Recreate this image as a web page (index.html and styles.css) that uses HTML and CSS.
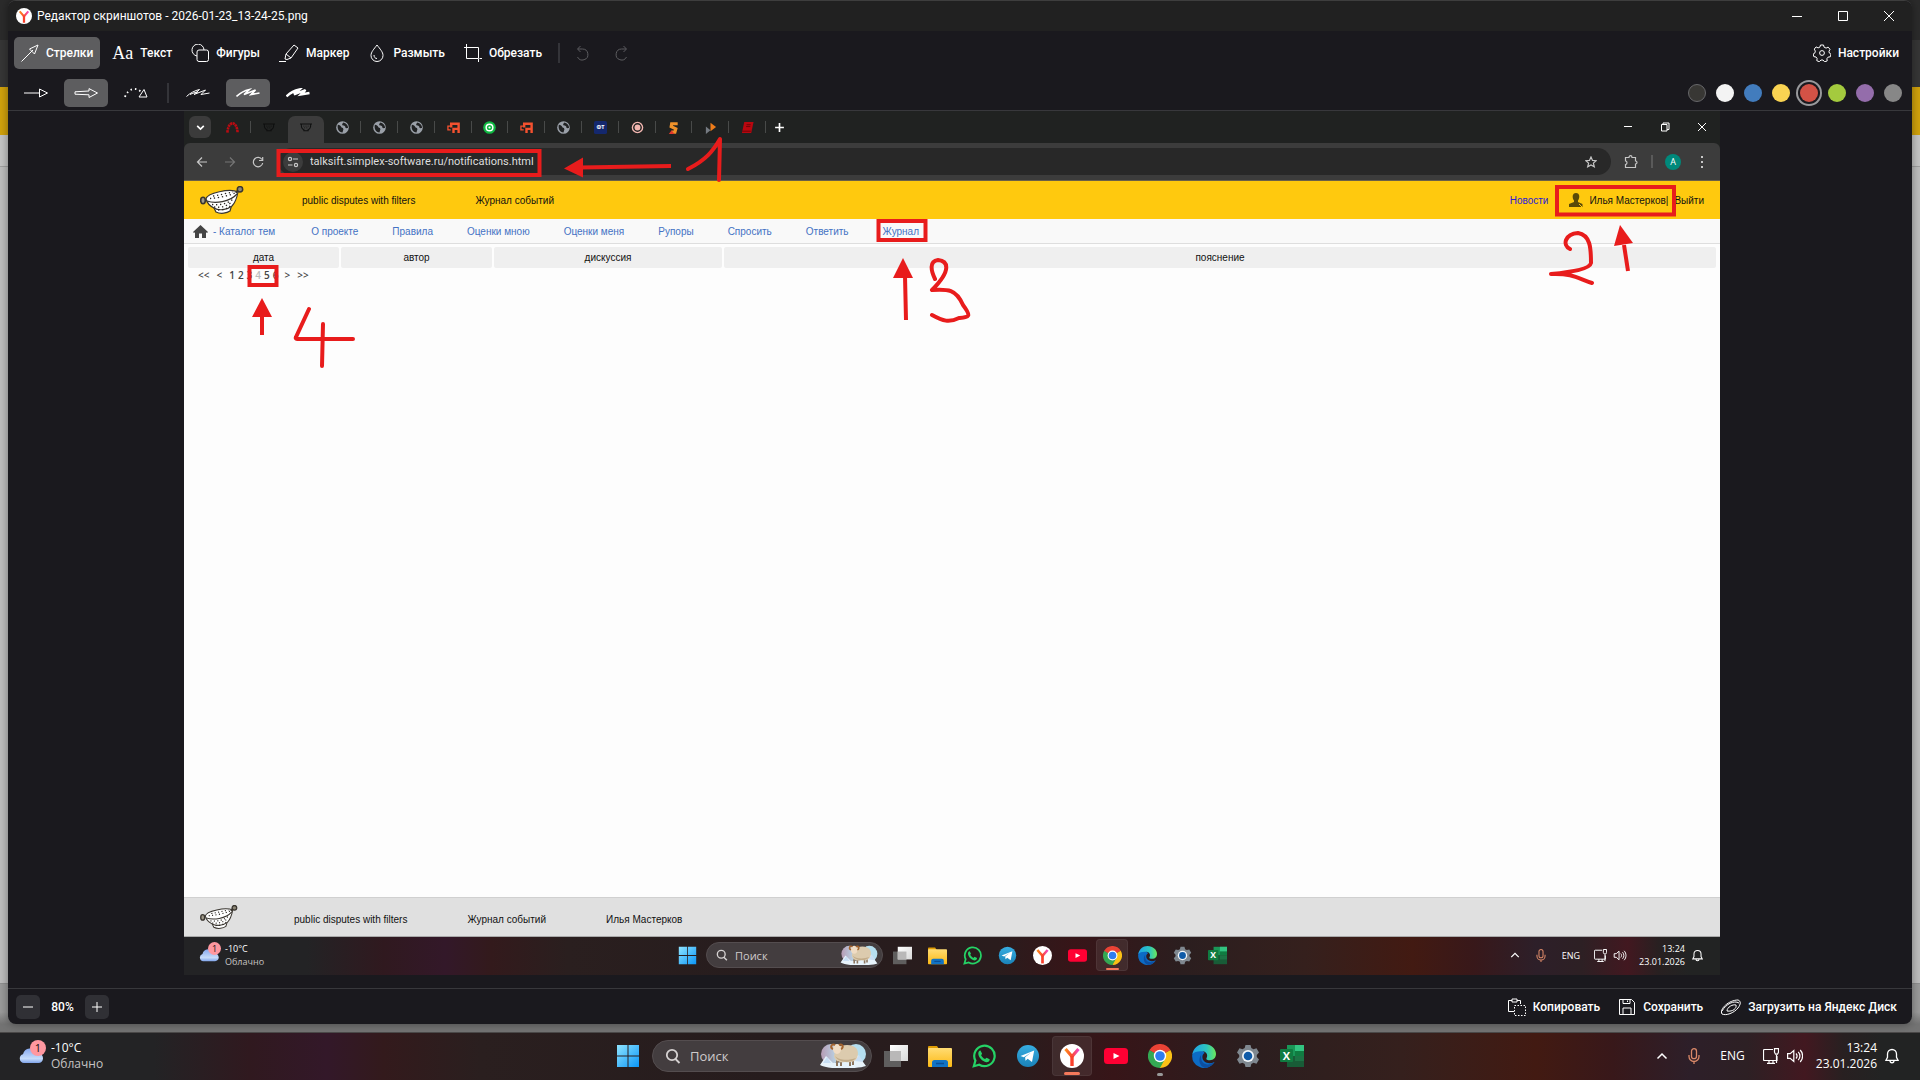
FILE: index.html
```html
<!DOCTYPE html>
<html lang="ru">
<head>
    <meta charset="UTF-8">
    <meta name="viewport" content="width=device-width, initial-scale=1.0">
    <title>Редактор скриншотов</title>
    <link rel="stylesheet" href="styles.css">
</head>
<body>
    <!-- shared icons -->
    <svg class="defs" aria-hidden="true">
        <defs>
            <linearGradient id="g-win" x1="0" y1="0" x2="1" y2="1"><stop offset="0" stop-color="#8fe4ff"/><stop offset="1" stop-color="#0a96f8"/></linearGradient>
            <linearGradient id="g-tg" x1="0" y1="0" x2="0" y2="1"><stop offset="0" stop-color="#37aee2"/><stop offset="1" stop-color="#1a82b8"/></linearGradient>
            <linearGradient id="g-fold" x1="0" y1="0" x2="0" y2="1"><stop offset="0" stop-color="#ffdc73"/><stop offset="1" stop-color="#fcb914"/></linearGradient>
            <linearGradient id="g-y" x1="0" y1="0" x2="1" y2="0"><stop offset="0" stop-color="#ff8a1f"/><stop offset=".5" stop-color="#fa4a2c"/><stop offset="1" stop-color="#f34ac6"/></linearGradient>
            <linearGradient id="g-edge" x1="0" y1="0" x2="1" y2="0"><stop offset="0" stop-color="#1fa2e8"/><stop offset=".6" stop-color="#2cc5c0"/><stop offset="1" stop-color="#6be85a"/></linearGradient>
            <linearGradient id="g-tv" x1="0" y1="0" x2="1" y2="1"><stop offset="0" stop-color="#ffffff"/><stop offset="1" stop-color="#d8d8d8"/></linearGradient>
            <linearGradient id="g-cloud" x1="0" y1="0" x2="0" y2="1"><stop offset="0" stop-color="#86a8ee"/><stop offset=".7" stop-color="#c6dcfa"/><stop offset="1" stop-color="#7fa3ea"/></linearGradient>
            <linearGradient id="g-sky" x1="0" y1="0" x2="1" y2="0"><stop offset="0" stop-color="#b79cb4"/><stop offset="1" stop-color="#b9e4f4"/></linearGradient>
            <symbol id="i-win" viewBox="0 0 24 24"><path fill="url(#g-win)" d="M1 1h10.500v10.500H1zM12.500 1H23v10.500H12.500zM1 12.500h10.500V23H1zM12.500 12.500H23V23H12.500z"/></symbol>
            <symbol id="i-tasks" viewBox="0 0 24 24"><path fill="#5f5e5e" d="M0 7h17v16H0z"/><path fill="url(#g-tv)" d="M6 1h18v16H6z"/><path fill="#b9b8b8" d="M6 7h11v10H6z"/></symbol>
            <symbol id="i-folder" viewBox="0 0 24 24"><path fill="#e09d05" d="M0 3a1 1 0 0 1 1-1h8l2 3v4H0z"/><rect y="4" width="24" height="19" rx="1" fill="url(#g-fold)"/><path fill="#1173c4" d="M4 23v-4.500a2.500 2.500 0 0 1 2.500-2.500h11a2.500 2.500 0 0 1 2.500 2.500V23z"/><path stroke="#0a4e96" stroke-width="1.500" d="M8 19.500h8"/></symbol>
            <symbol id="i-wa" viewBox="0 0 24 24"><path fill="none" stroke="#25d366" stroke-width="2.200" d="M1.800 22.200l1.600-5.600A10.200 10.200 0 1 1 7.300 20.700z"/><path fill="#25d366" d="M8.500 6.500l1.600 3.300-1 1.400c1 2 2.200 3 4 3.900l1.400-1.400 3.200 1.500c.1 2.200-1.700 3.200-3.500 3C10.500 17.600 6.400 13.500 6.300 9.600c0-1.700.8-3.200 2.200-3.100z"/></symbol>
            <symbol id="i-tg" viewBox="0 0 24 24"><circle cx="12" cy="12" r="11" fill="url(#g-tg)"/><path fill="#fff" d="M4.500 12L18.200 6.500 16 18l-4.300-3.200-2.200 2-.4-3.600 6-4.700-7.300 4.700z"/></symbol>
            <symbol id="i-ya" viewBox="0 0 24 24"><circle cx="12" cy="12" r="12" fill="#fff"/><path fill="none" stroke="url(#g-y)" stroke-width="3.200" d="M5.500 5l6.500 7.500L18.500 5"/><path stroke="#f9402c" stroke-width="3.400" d="M12 12v10"/></symbol>
            <symbol id="i-yt" viewBox="0 0 24 24"><rect y="4" width="24" height="16" rx="3.500" fill="#ff0033"/><path fill="#fff" d="M9.500 9l6 3-6 3z"/></symbol>
            <symbol id="i-chrome" viewBox="0 0 24 24"><path fill="#ea4335" d="M12 12L1.600 6A12 12 0 0 1 22.400 6z"/><path fill="#fbc116" d="M12 12l10.400-6A12 12 0 0 1 12 24z"/><path fill="#34a853" d="M1.600 6A12 12 0 0 0 12 24l5-9L12 12z"/><path fill="#ea4335" d="M12 6h10.400L12 1 1.600 6l5 3z"/><circle cx="12" cy="12" r="6.200" fill="#fff"/><circle cx="12" cy="12" r="4.800" fill="#2f7df0"/></symbol>
            <symbol id="i-edge" viewBox="0 0 24 24"><path fill="#0c6bc4" d="M.2 11A12 12 0 0 0 20 21c1.500-1.300 2.600-2.700 2.400-3-6 3-12 0-12-5 0-2 1-3.500 2.400-4C9 4 1.500 5 .2 11z"/><path fill="url(#g-edge)" d="M.3 10.500C1.300 4.500 6 .1 12 .1c7 0 12 4.900 12 9.900 0 3.800-2.800 6.200-6 6.200-2.500 0-4.200-.8-3.600-1.800 1.800-2.600.6-6.600-3.600-7.100C6.500 6.800 2 7.500.3 10.500z"/><path fill="#0d4ea0" d="M9 13c0 6 5 10 13 5.500A12 12 0 0 1 13 24C7 22 6 15 9 11z"/></symbol>
            <symbol id="i-gear" viewBox="0 0 24 24"><path fill="#7f8890" d="M9.500 1h5l.8 3 2.200 1.200 3-.9 2.500 4.200L20.800 11v2l2.200 2.500-2.500 4.200-3-.9-2.200 1.200-.8 3h-5l-.8-3-2.200-1.200-3 .9L1 15.500 3.200 13v-2L1 8.500l2.500-4.200 3 .9L8.700 4z"/><circle cx="12" cy="12" r="6" fill="#f2f6f9"/><circle cx="12" cy="12" r="4.300" fill="#0f5ba8"/></symbol>
            <symbol id="i-excel" viewBox="0 0 24 24"><path fill="#1a9657" d="M7 1h17v11H7z"/><path fill="#33c481" d="M15 1h9v6h-9z"/><path fill="#107c41" d="M15 7h9v5h-9z"/><path fill="#185c37" d="M7 12h17v11H7z"/><path fill="#1c7445" d="M15 12h9v5h-9z"/><rect y="5" width="13" height="13" rx="1" fill="#107c41"/><text x="6.500" y="15.500" fill="#fff" font-family="Open Sans, sans-serif" font-weight="700" font-size="11" text-anchor="middle">X</text></symbol>
            <symbol id="i-sheep" viewBox="0 0 46 25"><circle cx="11" cy="11" r="10" fill="url(#g-sky)"/><circle cx="36" cy="11" r="10" fill="#b5dff0"/><path fill="#e7f3fb" d="M0 22l6-9 7 7 20-2 5-6 8 11c-8 3-38 4-46-1z"/><path fill="#c8dff5" d="M3 20l4-6 4 6zM35 18l4-6 4 7z"/><path stroke="#8d7760" stroke-width="2" d="M17 17v6M21 18v5M30 18v5M33 16v6"/><path fill="#dccbae" d="M16 5c5-3 12-4 17-2 5 2 6 7 4 12-2 4-7 5-12 4-6 1-10-1-11-6z"/><path fill="#c2ac8a" d="M15 13c3 4 13 5 21 2-3 5-17 6-21-2z"/><ellipse cx="17" cy="6" rx="4" ry="5" fill="#f0dcc4"/><path fill="none" stroke="#a5632d" stroke-width="2" d="M15 2c-4-2-5 3-2 4M19 2c4-2 5 3 2 4"/></symbol>
            <symbol id="i-cloud" viewBox="0 0 24 16"><path fill="url(#g-cloud)" d="M5 15a4.500 4.500 0 0 1-1-8.800A7.500 7.500 0 0 1 18 4.500c4 .5 6 3 6 6 0 2.500-2 4.500-4.500 4.500z"/></symbol>
            <symbol id="i-search" viewBox="0 0 16 16"><g fill="none" stroke="#d6d2d2" stroke-width="1.800"><circle cx="7" cy="7" r="5.200"/><path d="M10.500 11l4 4"/></g></symbol>
            <symbol id="i-up" viewBox="0 0 12 12"><path fill="none" stroke="currentColor" stroke-width="1.500" d="M1.500 8.500L6 4l4.500 4.500"/></symbol>
            <symbol id="i-mic" viewBox="0 0 12 16"><g fill="none" stroke="#d98868" stroke-width="1.300"><rect x="3.500" y=".7" width="5" height="10" rx="2.500"/><path d="M1 7v1.500a5 5 0 0 0 10 0V7M6 13.500V16"/></g></symbol>
            <symbol id="i-mon" viewBox="0 0 16 16"><g fill="none" stroke="currentColor" stroke-width="1.200"><path d="M10 1.500H1.500a1 1 0 0 0-1 1v9a1 1 0 0 0 1 1H14V8M4 15.400h8M6 12.500v3M10 12.500v3M13.500 7v8"/><path d="M11.500.6h4v3.600l-1 2h-2l-1-2z"/></g></symbol>
            <symbol id="i-vol" viewBox="0 0 16 14"><g fill="none" stroke="currentColor" stroke-width="1.200"><path d="M.6 4.700h2.600L6.800 1.500v11L3.200 9.300H.6zM9 4.500c1.300 1.500 1.300 3.500 0 5M11.200 2.800c2.300 2.400 2.300 6 0 8.400M13.200 1c3.200 3.400 3.200 8.600 0 12"/></g></symbol>
            <symbol id="i-bell" viewBox="0 0 14 16"><g fill="none" stroke="currentColor" stroke-width="1.300"><path d="M1 12.300l1.500-3V6a4.500 4.500 0 0 1 9 0v3.300l1.500 3zM5 12.500c0 3 4 3 4 0"/></g></symbol>
            <symbol id="i-globe" viewBox="0 0 14 14"><circle cx="7" cy="7" r="6.800" fill="#9aa0a8"/><path fill="#202223" d="M2 4c2 0 3 1 4 3 1 0 2 1 2 2l-1 3.500C3 12 1 8 2 4zM8 1.500c-1 1-2 2-1 3s3 0 3 2 2 1 3 1c0-3-2-5.500-5-6z"/></symbol>
            <symbol id="i-bowl" viewBox="0 0 14 12"><path fill="none" stroke="currentColor" stroke-width="1.200" d="M0 2.500h14M1.500 3c0 3.500 1 5.500 3 6v1.500h5V9c2-.5 3-2.500 3-6"/><path stroke="currentColor" stroke-dasharray="1 1.500" d="M4 5h6M5 7h4"/></symbol>
            <symbol id="i-avito" viewBox="0 0 14 14"><path fill="none" stroke="#f4512f" stroke-width="2.600" d="M4.500 7V3h8v10M7 13V8.500h5.500"/><path fill="none" stroke="#f4512f" stroke-width="1.400" d="M4 5.500H1v4h3"/></symbol>
            <symbol id="i-colander" viewBox="0 0 44 28"><g fill="#fff" stroke="#3a3630" stroke-width="1.200"><path d="M14 22l2 4c5 2.500 11 1 14-1l1.500-5z"/><path d="M6 13C7 7 30 2 38 6c-1 5-2 10-6 14-5 4-13 5-18 2-4-2-7-5-8-9z"/><path fill="none" d="M7 15c8 3 23 1 30-7"/><ellipse cx="3" cy="14.500" rx="2.300" ry="3.200" fill="#a09a8a" stroke-width="1.600"/><path fill="none" stroke-width="2" d="M36 7l2-3"/><circle cx="40" cy="3.300" r="2.700" fill="#8d8776" stroke-width="1.500"/></g><g fill="none" stroke="#28241f" stroke-width="1.300" stroke-dasharray="1.300 2.700"><path d="M10 12.500C18 12 28 10 35 7"/><path d="M13 10C20 9 27 7 33 6"/><path d="M12 18.500c8 1 16-1 22-6"/><path d="M14 21c7 1 13-1 18-5"/><path d="M18 24c5 0 9-1 12-4"/></g></symbol>
        </defs>
    </svg>

    <div class="desktop">
        <main class="window">
            <div class="titlebar">
                <svg class="app-icon"><use href="#i-ya"/></svg>
                <h1>Редактор скриншотов - 2026-01-23_13-24-25.png</h1>
                <div class="win-buttons">
                    <button aria-label="Свернуть"><svg viewBox="0 0 10 10"><path d="M0 5.500h10"/></svg></button>
                    <button aria-label="Развернуть"><svg viewBox="0 0 10 10"><path d="M.5.5h9v9h-9z"/></svg></button>
                    <button aria-label="Закрыть"><svg viewBox="0 0 10 10"><path d="M0 0l10 10M10 0L0 10"/></svg></button>
                </div>
            </div>

            <div class="toolbar">
                <button class="tool active"><svg viewBox="0 0 18 18"><path d="M.5 17.500L12 6M8.500 5L17 1l-3.500 9z"/></svg>Стрелки</button>
                <button class="tool"><span class="aa">Aa</span>Текст</button>
                <button class="tool"><svg viewBox="0 0 18 18"><path d="M6 12A6 6 0 1 1 13 6"/><rect x="6" y="6" width="11.500" height="11.500" rx="2"/></svg>Фигуры</button>
                <button class="tool"><svg class="wide" viewBox="0 0 20 18"><path d="M0 17.500h7M6 15l1-5 8-9 4 3-7 10-4 1.500zM7 10l5 4"/></svg>Маркер</button>
                <button class="tool"><svg viewBox="0 0 18 18"><path d="M9 1c3 4 6 7 6 10.500a6 6 0 0 1-12 0C3 8 6 5 9 1zM6 11c0 2 1 3.500 3 3.500"/></svg>Размыть</button>
                <button class="tool"><svg viewBox="0 0 18 18"><path d="M2.500 0v14.500H14.500V3.500H0M14.500 15v3M15.500 14.500H18"/></svg>Обрезать</button>
                <span class="divider"></span>
                <button class="icon-btn" disabled aria-label="Отменить"><svg viewBox="0 0 14 16"><path d="M4.500 1L1.500 4l3 3M2 4h4.500a5.500 5.500 0 1 1-5 8"/></svg></button>
                <button class="icon-btn" disabled aria-label="Повторить"><svg viewBox="0 0 14 16"><path d="M9.500 1l3 3-3 3M12 4H7.500a5.500 5.500 0 1 0 5 8"/></svg></button>
                <button class="tool settings"><svg viewBox="0 0 18 18"><path d="M7.500 1h3l.6 2.200 2 .9 2-1 1.900 2.200-1 2 .3 1.700 1.700 1.200-.7 2.600-2.200.3-1.200 1.600.3 2.200-2.500 1L10 16H8l-1.700 1.700-2.500-1 .3-2.200L3 13l-2.200-.4L.2 10 2 8.800l.3-1.700-1-2 1.800-2.200 2 1 1.800-.8z"/><circle cx="9" cy="9" r="2.400"/></svg>Настройки</button>
            </div>

            <div class="toolbar options">
                <button class="opt" aria-label="Тонкая стрелка"><svg viewBox="0 0 24 10"><path d="M0 5h15.500M15.500 1v8L23.500 5z"/></svg></button>
                <button class="opt active" aria-label="Толстая стрелка"><svg viewBox="0 0 24 10"><path d="M1 3.800L15 3V.6L23.500 5 15 9.500V6.800L1 6.200z"/></svg></button>
                <button class="opt" aria-label="Пунктирная стрелка"><svg viewBox="0 0 24 10"><path stroke-width="1.800" stroke-dasharray="1.500 3" d="M1 9C4 0 13-1 17 4"/><path d="M15 9l5-7.500L23 9z"/></svg></button>
                <span class="divider"></span>
                <button class="opt" aria-label="Тонкая линия"><svg viewBox="0 0 24 10"><path d="M.5 8.500C4 5 9 2.500 13.500 1.500L8 6.500 19.500 2 15 6.500l8.500-1.500M4 6.500c3-1.500 5-2 8-2.500"/></svg></button>
                <button class="opt active" aria-label="Средняя линия"><svg viewBox="0 0 24 10"><path stroke-width="1.600" d="M.5 8.500C4 5 9 2.500 13.500 1.500L8 6.500 19.500 2 15 6.500l8.500-1.500"/></svg></button>
                <button class="opt" aria-label="Толстая линия"><svg viewBox="0 0 24 10"><path stroke-width="2.400" d="M.5 8.500C4 5 9 2.500 13.500 1.500L8 6.500 19.500 2 15 6.500l8.500-1.500"/></svg></button>
                <div class="swatches">
                    <input type="radio" name="color" class="c-black" aria-label="Чёрный">
                    <input type="radio" name="color" class="c-white" aria-label="Белый">
                    <input type="radio" name="color" class="c-blue" aria-label="Синий">
                    <input type="radio" name="color" class="c-yellow" aria-label="Жёлтый">
                    <input type="radio" name="color" class="c-red" aria-label="Красный" checked>
                    <input type="radio" name="color" class="c-green" aria-label="Зелёный">
                    <input type="radio" name="color" class="c-purple" aria-label="Фиолетовый">
                    <input type="radio" name="color" class="c-gray" aria-label="Серый">
                </div>
            </div>

            <div class="stage">
                <div class="shot">
                    <div class="tabstrip">
                        <button class="tab-menu" aria-label="Поиск вкладок"><svg viewBox="0 0 10 10"><path d="M2 3.500l3 3 3-3"/></svg></button>
                        <div class="tabs">
                            <span class="tab"><svg viewBox="0 0 14 14"><path fill="none" stroke="#b90b12" stroke-width="2.800" stroke-dasharray="2.500 .6" d="M1.500 12.500C2 5 5 2.500 7 2.500s5 2.500 5.500 10"/></svg></span>
                            <span class="tab no-line"><svg class="bowl"><use href="#i-bowl"/></svg></span>
                            <span class="tab current"><svg class="bowl"><use href="#i-bowl"/></svg></span>
                            <span class="tab"><svg><use href="#i-globe"/></svg></span>
                            <span class="tab"><svg><use href="#i-globe"/></svg></span>
                            <span class="tab"><svg><use href="#i-globe"/></svg></span>
                            <span class="tab"><svg><use href="#i-avito"/></svg></span>
                            <span class="tab"><svg viewBox="0 0 14 14"><circle cx="7" cy="7" r="6.800" fill="#0fb842"/><circle cx="7" cy="7" r="3.600" fill="none" stroke="#fff" stroke-width="1.600"/><circle cx="7" cy="7" r="1.200" fill="#fff"/></svg></span>
                            <span class="tab"><svg><use href="#i-avito"/></svg></span>
                            <span class="tab"><svg><use href="#i-globe"/></svg></span>
                            <span class="tab"><svg viewBox="0 0 14 14"><rect width="14" height="14" rx="2" fill="#14286e"/><text x="7" y="9" fill="#fff" font-family="Open Sans, sans-serif" font-weight="700" font-size="6" text-anchor="middle">ФТ</text></svg></span>
                            <span class="tab"><svg viewBox="0 0 14 14"><circle cx="7" cy="7" r="5.500" fill="none" stroke="#f2b6b0" stroke-width="1.500"/><circle cx="7" cy="7" r="3.200" fill="#f2b6b0"/></svg></span>
                            <span class="tab"><svg viewBox="0 0 14 14"><path fill="none" stroke="#f0922a" stroke-width="3.400" d="M11.500 3L5 3l-.5 3 5 2.500-1 3.500H5"/><path fill="#e0392b" d="M2 14l3-4 3 4z"/></svg></span>
                            <span class="tab"><svg viewBox="0 0 14 14"><path fill="#757b82" d="M2 6l5 4-5 4z"/><path fill="#ef7c1a" d="M7 2l6 4.500L7 11z"/></svg></span>
                            <span class="tab"><svg viewBox="0 0 14 14"><path fill="#b8070f" d="M3.500 1h10l-2.500 12H1z"/><path stroke="#5a0206" stroke-width=".8" d="M6 4h4.500M5.500 6h4.500M1.500 11h9"/></svg></span>
                        </div>
                        <button class="new-tab" aria-label="Новая вкладка"><svg viewBox="0 0 10 10"><path d="M5 1v8M1 5h8"/></svg></button>
                        <div class="shot-win-buttons">
                            <button aria-label="Свернуть"><svg viewBox="0 0 10 10"><path d="M1 4.500h8"/></svg></button>
                            <button aria-label="Восстановить"><svg viewBox="0 0 10 10"><path d="M1.500 2.500h5.500v6.500H1.500zM3 2.500V1h6v6.500H7"/></svg></button>
                            <button aria-label="Закрыть"><svg viewBox="0 0 10 10"><path d="M1 1l8 8M9 1L1 9"/></svg></button>
                        </div>
                    </div>

                    <div class="navbar">
                        <button aria-label="Назад"><svg viewBox="0 0 12 12"><path d="M11 6H2M6 1.500L1.500 6 6 10.500"/></svg></button>
                        <button aria-label="Вперёд" disabled><svg viewBox="0 0 12 12"><path d="M1 6h9M6 1.500L10.500 6 6 10.500"/></svg></button>
                        <button aria-label="Обновить"><svg viewBox="0 0 12 12"><path d="M10 3.500A4.700 4.700 0 1 0 10.700 7M10.700 1v3.500H7"/></svg></button>
                        <div class="address">
                            <span class="site-info"><svg viewBox="0 0 12 12"><path d="M6 3h5M1 9h4.500"/><circle cx="3" cy="3" r="1.600"/><circle cx="9" cy="9" r="1.600"/></svg></span>
                            <input type="text" aria-label="Адрес" value="talksift.simplex-software.ru/notifications.html">
                            <svg viewBox="0 0 12 12"><path d="M6 1l1.500 3.400 3.700.3-2.800 2.400.9 3.700L6 8.900l-3.300 1.900.9-3.700L.8 4.700l3.700-.3z"/></svg>
                        </div>
                        <button class="ext" aria-label="Расширения"><svg viewBox="0 0 14 14"><path d="M1.500 2.500h3.500c0-2.500 3-2.500 3 0h3.500V6c2 0 2 3 0 3v3.500h-10V9.500c2 0 2-3.500 0-3.500z"/></svg></button>
                        <span class="nav-line"></span>
                        <span class="avatar">A</span>
                        <button class="dots" aria-label="Меню"><svg viewBox="0 0 12 12"><path stroke-width="2" d="M5 1h2M5 6h2M5 11h2"/></svg></button>
                    </div>

                    <header class="site-header">
                        <svg class="logo"><use href="#i-colander"/></svg>
                        <span>public disputes with filters</span>
                        <span>Журнал событий</span>
                        <div class="user">
                            <a class="news" href="#">Новости</a>
                            <svg class="person" viewBox="0 0 14 14"><path fill="#5a4a08" d="M7 0c4 0 4 5 2 7.500v1.500l4.500 2V14H0v-3l5-2V7.500C3 5 3 0 7 0z"/><path stroke="#ffc90e" d="M10 11l3 3"/></svg>
                            <a href="#">Илья Мастерков</a><span>|</span><a class="exit" href="#">Выйти</a>
                        </div>
                    </header>

                    <nav class="site-nav">
                        <a href="#" class="home"><svg viewBox="0 0 15 13"><path d="M7.500 0L15 7l-1 1-1-.8V13H9V8.500H6V13H2V7.200L1 8 0 7z"/></svg>- Каталог тем</a>
                        <a href="#">О проекте</a>
                        <a href="#">Правила</a>
                        <a href="#">Оценки мною</a>
                        <a href="#">Оценки меня</a>
                        <a href="#">Рупоры</a>
                        <a href="#">Спросить</a>
                        <a href="#">Ответить</a>
                        <a href="#">Журнал</a>
                    </nav>

                    <div class="content">
                        <table class="log">
                            <thead>
                                <tr>
                                    <th class="col-date">дата</th>
                                    <th class="col-author">автор</th>
                                    <th class="col-talk">дискуссия</th>
                                    <th>пояснение</th>
                                </tr>
                            </thead>
                        </table>
                        <div class="pager">
                            <a href="#" class="jump">&lt;&lt;</a><a href="#" class="jump">&lt;</a><a href="#">1</a><a href="#">2</a><a href="#">3</a><a href="#" class="here">4</a><a href="#">5</a><a href="#" class="last">6</a><a href="#" class="jump">&gt;</a><a href="#" class="jump">&gt;&gt;</a>
                        </div>
                    </div>

                    <footer class="site-footer">
                        <svg class="logo"><use href="#i-colander"/></svg>
                        <span>public disputes with filters</span>
                        <span>Журнал событий</span>
                        <span>Илья Мастерков</span>
                    </footer>

                    <div class="taskbar small">
                        <div class="weather">
                            <span class="cloud"><svg><use href="#i-cloud"/></svg><b>1</b></span>
                            <span class="temp">-10°C<br><i>Облачно</i></span>
                        </div>
                        <div class="apps">
                            <span class="app"><svg><use href="#i-win"/></svg></span>
                            <label class="search"><svg class="lens"><use href="#i-search"/></svg><input type="text" placeholder="Поиск" aria-label="Поиск"><svg class="sheep"><use href="#i-sheep"/></svg></label>
                            <span class="app"><svg><use href="#i-tasks"/></svg></span>
                            <span class="app"><svg><use href="#i-folder"/></svg></span>
                            <span class="app"><svg><use href="#i-wa"/></svg></span>
                            <span class="app"><svg><use href="#i-tg"/></svg></span>
                            <span class="app"><svg><use href="#i-ya"/></svg></span>
                            <span class="app"><svg><use href="#i-yt"/></svg></span>
                            <span class="app focused"><svg><use href="#i-chrome"/></svg></span>
                            <span class="app"><svg><use href="#i-edge"/></svg></span>
                            <span class="app"><svg><use href="#i-gear"/></svg></span>
                            <span class="app"><svg><use href="#i-excel"/></svg></span>
                        </div>
                        <div class="tray">
                            <svg class="t-up"><use href="#i-up"/></svg>
                            <svg class="t-mic"><use href="#i-mic"/></svg>
                            <span class="lang">ENG</span>
                            <svg class="t-mon"><use href="#i-mon"/></svg>
                            <svg class="t-vol"><use href="#i-vol"/></svg>
                            <span class="clock">13:24<br>23.01.2026</span>
                            <svg class="t-bell"><use href="#i-bell"/></svg>
                        </div>
                    </div>

                    <!-- marks drawn over the screenshot; origin is the shot's own corner -->
                    <svg class="marks marks-left" viewBox="0 0 800 280">
                        <g class="box">
                            <path d="M94.500 40h261v24h-261z"/>
                            <path d="M694.500 110h47v19h-47z"/>
                            <path d="M65.500 156h27v18h-27z"/>
                        </g>
                        <path class="shaft" d="M396 56.500l91-1.500M721 165l1 44M78 205v19"/>
                        <path class="tip" d="M380 57.500l19-11v20zM719 147l10 20h-20zM78 187l10 19H68z"/>
                        <path class="pen" d="M504 58c18-9 25-18 32-30l-1 41M751 168c-4-8-6-18 3-19 10 1 14 10-6 30 16-1 24-1 31 15 9 12 6 12-4 13-10 5-16 3-27-3M125 198l-13 28c-1 2 1 2 4 2l53 0M139 213l-1 42"/>
                    </svg>
                    <svg class="marks marks-right" viewBox="0 0 200 200">
                        <g class="box"><path d="M37 76h117v27.500H37z"/></g>
                        <path class="shaft" d="M104 134l4 26"/>
                        <path class="tip" d="M100 114l13 18-19 3z"/>
                        <path class="pen" d="M50 138c-8-4-5-15 8-16 12 2 13 14 13 30-1 6-20 9-40 11 22-1 28 5 41 9"/>
                    </svg>
                </div>
            </div>

            <div class="statusbar">
                <button class="zoom-btn" aria-label="Уменьшить"><svg viewBox="0 0 10 10"><path d="M0 5h10"/></svg></button>
                <span class="zoom">80%</span>
                <button class="zoom-btn" aria-label="Увеличить"><svg viewBox="0 0 10 10"><path d="M0 5h10M5 0v10"/></svg></button>
                <div class="actions">
                    <button class="tool"><svg viewBox="0 0 18 18"><path d="M6 13.500H.5V2.500H4M9 2.500h3.500V6M4 1h5v3H4z"/><path stroke-dasharray="1.500 1.500" d="M6.500 7.500h11v10h-11z"/></svg>Копировать</button>
                    <button class="tool"><svg viewBox="0 0 18 18"><path d="M1.500 1.500h12l3 3v12h-15zM5 1.500v4h7v-4M5 16V10h8v6M9.500 2.500v1.500"/></svg>Сохранить</button>
                    <button class="tool"><svg class="wide" viewBox="0 0 20 16"><path d="M1 15c-3-5 7-14 16-14 3 1 3 4 0 8-4 5-12 8-16 6zM1 12C5 5 13 1 18 4M6 12c0-4 6-7 9-6 1 3-3 7-9 6z"/></svg>Загрузить на Яндекс Диск</button>
                </div>
            </div>
        </main>

        <div class="taskbar">
            <div class="weather">
                <span class="cloud"><svg><use href="#i-cloud"/></svg><b>1</b></span>
                <span class="temp">-10°C<br><i>Облачно</i></span>
            </div>
            <div class="apps">
                <span class="app"><svg><use href="#i-win"/></svg></span>
                <label class="search"><svg class="lens"><use href="#i-search"/></svg><input type="text" placeholder="Поиск" aria-label="Поиск"><svg class="sheep"><use href="#i-sheep"/></svg></label>
                <span class="app"><svg><use href="#i-tasks"/></svg></span>
                <span class="app"><svg><use href="#i-folder"/></svg></span>
                <span class="app"><svg><use href="#i-wa"/></svg></span>
                <span class="app"><svg><use href="#i-tg"/></svg></span>
                <span class="app focused"><svg><use href="#i-ya"/></svg></span>
                <span class="app"><svg><use href="#i-yt"/></svg></span>
                <span class="app running"><svg><use href="#i-chrome"/></svg></span>
                <span class="app"><svg><use href="#i-edge"/></svg></span>
                <span class="app"><svg><use href="#i-gear"/></svg></span>
                <span class="app"><svg><use href="#i-excel"/></svg></span>
            </div>
            <div class="tray">
                <svg class="t-up"><use href="#i-up"/></svg>
                <svg class="t-mic"><use href="#i-mic"/></svg>
                <span class="lang">ENG</span>
                <svg class="t-mon"><use href="#i-mon"/></svg>
                <svg class="t-vol"><use href="#i-vol"/></svg>
                <span class="clock">13:24<br>23.01.2026</span>
                <svg class="t-bell"><use href="#i-bell"/></svg>
            </div>
        </div>
    </div>
</body>
</html>
```
FILE: styles.css
```css
* {
    box-sizing: border-box;
}
body {
    margin: 0;
    font-family: "Open Sans", "Noto Sans", sans-serif;
    font-size: 12px;
    color: #fff;
}
button {
    font: inherit;
    color: inherit;
    background: none;
    border: none;
    padding: 0;
    cursor: pointer;
}
a {
    color: inherit;
    text-decoration: none;
}
svg {
    display: block;
    flex: none;
}
button svg, .address svg {
    fill: none;
    stroke: currentColor;
}
.defs {
    position: absolute;
    width: 0;
    height: 0;
}

/* desktop */
.desktop {
    display: flex;
    flex-direction: column;
    min-height: 100vh;
    background: linear-gradient(#2b2b2b 0 40px, #363636 40px 87px, #d0a10c 87px 135px, #c4c4c4 135px 166px, #a0a0a0 166px 167px, #bdbdbd 167px 983px, #8f8f8f 983px 984px, #9a9a9a 984px 1012px, #737373 1024px);
}
.window {
    flex: 1;
    display: flex;
    flex-direction: column;
    margin: 0 8px 8px;
    background: #1a191e;
    border-top: 1px solid #3e3e3e;
    border-radius: 8px;
    overflow: hidden;
    box-shadow: 0 0 8px rgba(0, 0, 0, 0.4);
}

/* editor chrome */
.titlebar {
    display: flex;
    align-items: center;
    height: 30px;
    padding-left: 8px;
    background: #212121;
}
.titlebar h1 {
    flex: 1;
    margin: 0 0 0 5px;
    font-family: Roboto, sans-serif;
    font-size: 12px;
    font-weight: 400;
}
.app-icon {
    width: 16px;
    height: 16px;
}
.win-buttons {
    display: flex;
}
.win-buttons button {
    display: grid;
    place-items: center;
    width: 46px;
    height: 30px;
}
.win-buttons svg {
    width: 10px;
    height: 10px;
}
.toolbar {
    display: flex;
    align-items: center;
    height: 44px;
    padding: 0 6px;
}
.tool {
    display: flex;
    align-items: center;
    gap: 7px;
    height: 32px;
    padding: 0 7px;
    border-radius: 5px;
    font-family: Roboto, sans-serif;
    font-weight: 500;
    margin-right: 5px;
}
.tool svg {
    width: 18px;
    height: 18px;
}
.tool svg.wide {
    width: 20px;
}
.aa {
    font-family: "Liberation Serif", serif;
    font-size: 18px;
    font-weight: 400;
}
.active {
    background: #5d5d5f;
}
.divider {
    width: 2px;
    height: 20px;
    margin: 0 4px;
    background: #343439;
}
.icon-btn {
    width: 38px;
    height: 32px;
    display: grid;
    place-items: center;
    color: #5d5d60;
}
.icon-btn svg {
    width: 14px;
    height: 16px;
}
.toolbar .settings {
    margin: 0 0 0 auto;
}
.options {
    height: 36px;
    border-bottom: 1px solid #38383c;
}
.opt {
    display: grid;
    place-items: center;
    width: 44px;
    height: 28px;
    margin-right: 6px;
    border-radius: 5px;
}
.opt svg {
    width: 24px;
    height: 10px;
}
.options .divider {
    margin: 0 7px 0 3px;
}
.swatches {
    display: flex;
    gap: 10px;
    margin-left: auto;
    padding-right: 4px;
}
.swatches input {
    appearance: none;
    width: 18px;
    height: 18px;
    margin: 0;
    border-radius: 50%;
}
.swatches input:checked {
    box-shadow: 0 0 0 2px #1a191e, 0 0 0 4px #99999c;
}
.c-black {
    background: #383734;
    border: 1px solid #67676a;
}
.c-white { background: #f3f3f3; }
.c-blue { background: #427cbd; }
.c-yellow { background: #f9d352; }
.c-red { background: #d35246; }
.c-green { background: #a4ca3e; }
.c-purple { background: #946dab; }
.c-gray { background: #878787; }

.stage {
    flex: 1;
    display: flex;
    padding: 0 192px 13px 176px;
}
.shot {
    flex: 1;
    display: flex;
    flex-direction: column;
    position: relative;
    background: #202221;
    font-size: 11px;
}

/* browser in the shot */
.tabstrip {
    display: flex;
    align-items: center;
    height: 32px;
    padding-left: 5px;
}
.tab-menu {
    display: grid;
    place-items: center;
    width: 22px;
    height: 22px;
    border-radius: 6px;
    background: #3b3b3b;
}
.tab-menu svg, .new-tab svg {
    width: 11px;
    height: 11px;
    stroke-width: 1.5;
}
.tabs {
    display: flex;
    width: 552px;
    height: 32px;
    margin-left: 3px;
}
.tab {
    flex: 1;
    display: grid;
    place-items: center;
    position: relative;
}
.tab svg {
    width: 13px;
    height: 13px;
}
.tab .bowl {
    width: 12px;
    height: 12px;
    color: #0e0f0f;
}
.tab::after {
    content: "";
    position: absolute;
    right: 0;
    width: 1px;
    height: 12px;
    background: #484a49;
}
.tab.current {
    margin-top: 5px;
    padding-bottom: 5px;
    background: #3c3c3c;
    border-radius: 7px 7px 0 0;
}
.tab.current::after, .tab.no-line::after {
    display: none;
}
.new-tab {
    display: grid;
    place-items: center;
    width: 26px;
}
.shot-win-buttons {
    display: flex;
    margin-left: auto;
}
.shot-win-buttons button {
    display: grid;
    place-items: center;
    width: 37px;
    height: 32px;
}
.shot-win-buttons svg {
    width: 10px;
    height: 10px;
}
.navbar {
    display: flex;
    align-items: center;
    height: 38px;
    padding: 0 4px;
    background: #3c3c3c;
    border-radius: 6px 6px 0 0;
    border-bottom: 1px solid #6a6048;
}
.navbar button {
    display: grid;
    place-items: center;
    width: 28px;
    height: 28px;
    color: #c7c7c7;
}
.navbar button:disabled {
    color: #757575;
}
.navbar svg {
    width: 12px;
    height: 12px;
    stroke-width: 1.2;
}
.address {
    flex: 1;
    display: flex;
    align-items: center;
    height: 27px;
    margin: 0 6px;
    padding: 0 14px 0 5px;
    border-radius: 14px;
    background: #282828;
    color: #c7c7c7;
}
.site-info {
    display: grid;
    place-items: center;
    width: 20px;
    height: 20px;
    border-radius: 50%;
    background: #3c3c3c;
}
.address input {
    flex: 1;
    border: none;
    outline: none;
    padding: 0 0 0 7px;
    background: none;
    font-family: Roboto, sans-serif;
    font-size: 11px;
    color: #dedede;
}
.navbar .ext svg {
    width: 14px;
    height: 14px;
}
.nav-line {
    width: 2px;
    height: 13px;
    margin: 0 12px 0 6px;
    background: #5a5a5a;
}
.avatar {
    width: 16px;
    height: 16px;
    border-radius: 50%;
    background: #00897b;
    font-size: 9px;
    line-height: 16px;
    text-align: center;
}
.navbar .dots {
    margin-left: 7px;
}

/* the site in the browser */
.site-header, .site-footer {
    display: flex;
    align-items: center;
    font-family: "Liberation Sans", Arial, sans-serif;
    font-size: 10px;
    color: #111;
}
.site-header {
    height: 38px;
    padding: 0 16px;
    background: #ffc90e;
}
.site-header .logo {
    width: 44px;
    height: 28px;
    margin-right: 58px;
}
.site-header > span {
    margin-right: 60px;
}
.user {
    display: flex;
    align-items: center;
    margin-left: auto;
}
.news {
    color: #2a1cd8;
    margin-right: 21px;
}
.person {
    width: 14px;
    height: 14px;
    margin-right: 6px;
}
.exit {
    margin-left: 6px;
}
.site-nav {
    display: flex;
    align-items: center;
    gap: 34px;
    height: 25px;
    padding-left: 9px;
    background: #f9f9f9;
    border-bottom: 1px solid #dedede;
    font-family: "Liberation Sans", Arial, sans-serif;
    font-size: 10px;
    color: #4472c4;
}
.home {
    display: flex;
    align-items: center;
    gap: 5px;
    padding-right: 2px;
}
.home svg {
    width: 15px;
    height: 13px;
    fill: #444;
}
.content {
    flex: 1;
    padding: 1px 2px;
    background: #fdfdfd;
    font-family: "Liberation Sans", Arial, sans-serif;
    font-size: 10px;
    color: #111;
}
.log {
    width: 100%;
    table-layout: fixed;
    border-collapse: separate;
    border-spacing: 2px;
}
.log th {
    height: 21px;
    padding: 0;
    background: #efefef;
    border-radius: 2px;
    font-weight: 400;
}
.col-date, .col-author {
    width: 151px;
}
.col-talk {
    width: 228px;
}
.pager {
    display: flex;
    gap: 3px;
    padding: 0 12px;
    font-family: "Open Sans", sans-serif;
    font-size: 10px;
    line-height: 10px;
    font-weight: 600;
    color: #444;
}
.jump {
    margin-right: 4px;
}
.last {
    margin-right: 3px;
}
.here {
    color: #bbb;
}
.site-footer {
    height: 40px;
    padding: 0 16px;
    background: #e0e0e0;
    border-top: 1px solid #d0d0d0;
    border-bottom: 1px solid #a9a9a9;
}
.site-footer .logo {
    width: 38px;
    height: 24px;
    margin-right: 56px;
}
.site-footer span {
    padding-top: 4px;
    margin-right: 60px;
}

/* marks */
.marks {
    position: absolute;
    top: 0;
    fill: none;
    stroke: #e81c1c;
    stroke-width: 4;
    pointer-events: none;
}
.marks-left {
    left: 0;
    width: 800px;
    height: 280px;
}
.marks-right {
    right: 0;
    width: 200px;
    height: 200px;
}
.marks .tip {
    fill: #e81c1c;
    stroke: none;
}
.marks .pen {
    stroke-linecap: round;
    stroke-linejoin: round;
}

/* status bar */
.statusbar {
    display: flex;
    align-items: center;
    height: 36px;
    padding: 0 8px;
    border-top: 1px solid #38383c;
}
.zoom-btn {
    display: grid;
    place-items: center;
    width: 24px;
    height: 24px;
    border-radius: 5px;
    background: #303035;
}
.zoom-btn svg {
    width: 10px;
    height: 10px;
}
.zoom {
    width: 45px;
    text-align: center;
    font-family: Roboto, sans-serif;
    font-weight: 500;
}
.actions {
    display: flex;
    gap: 4px;
    margin-left: auto;
}
.actions .tool {
    margin-right: 0;
}

/* taskbar, used on the desktop and inside the shot */
.taskbar {
    display: grid;
    grid-template-columns: 1fr auto 1fr;
    align-items: center;
    height: 48px;
    padding-bottom: 2px;
    border-top: 1px solid #4a4848;
    background: linear-gradient(90deg, #232325 0, #232325 8%, #30191f 13%, #331829 17%, #331a1c 20%, #2a1f1f 25%, #261c1d 40%, #2a1c1d 53%, #371518 58%, #2b1e1f 65%, #35201d 73%, #421a12 80%, #38181a 84%, #2d1f29 88%, #2d2024 91%, #421820 94%, #282021 96%, #222323 98%);
    font-size: 12px;
    line-height: 16px;
}
.weather {
    display: flex;
    align-items: center;
    gap: 8px;
    padding-left: 19px;
}
.weather i {
    font-style: normal;
    color: #c6c3c3;
}
.cloud {
    position: relative;
}
.cloud svg {
    width: 24px;
    height: 16px;
}
.cloud b {
    position: absolute;
    top: -8px;
    right: -3px;
    width: 16px;
    height: 16px;
    border-radius: 50%;
    background: #ff98a0;
    color: #111;
    font-size: 11px;
    font-weight: 400;
    text-align: center;
}
.apps {
    display: flex;
    align-items: center;
    gap: 4px;
}
.app {
    display: grid;
    place-items: center;
    position: relative;
    width: 40px;
    height: 40px;
    border-radius: 4px;
}
.app svg {
    width: 24px;
    height: 24px;
}
.app.focused {
    background: rgba(255, 255, 255, 0.08);
    border: 1px solid rgba(255, 255, 255, 0.06);
}
.app.focused::after, .app.running::after {
    content: "";
    position: absolute;
    bottom: 0;
    width: 16px;
    height: 3px;
    border-radius: 2px;
    background: #f6795b;
}
.app.running::after {
    width: 6px;
    background: #999;
}
.search {
    display: flex;
    align-items: center;
    width: 220px;
    height: 32px;
    padding: 0 5px 0 12px;
    border: 1px solid #544d4f;
    border-radius: 16px;
    background: #433d3f;
}
.search input {
    flex: 1;
    min-width: 0;
    padding: 0 0 0 9px;
    border: none;
    outline: none;
    background: none;
    font: inherit;
    font-size: 13px;
}
.search input::placeholder {
    color: #cfcbcb;
    opacity: 1;
}
.lens {
    width: 16px;
    height: 16px;
}
.sheep {
    width: 46px;
    height: 25px;
}
.tray {
    display: flex;
    align-items: center;
    justify-content: flex-end;
    padding-right: 21px;
}
.t-up {
    width: 12px;
    height: 12px;
    margin-right: 20px;
}
.t-mic {
    width: 12px;
    height: 16px;
    margin-right: 20px;
}
.lang {
    margin-right: 18px;
}
.t-mon {
    width: 16px;
    height: 16px;
    margin-right: 8px;
}
.t-vol {
    width: 16px;
    height: 14px;
    margin-right: 13px;
}
.clock {
    text-align: right;
}
.t-bell {
    width: 14px;
    height: 16px;
    margin-left: 8px;
}

.small {
    height: 38px;
    border-top: none;
    font-size: 9px;
    line-height: 13px;
}
.small .weather {
    gap: 6px;
    padding-left: 15px;
}
.small .cloud svg {
    width: 20px;
    height: 13px;
}
.small .cloud b {
    top: -7px;
    right: -2px;
    width: 13px;
    height: 13px;
    font-size: 9px;
}
.small .apps {
    gap: 3px;
}
.small .app {
    width: 32px;
    height: 32px;
}
.small .app svg {
    width: 19px;
    height: 19px;
}
.small .app.focused::after {
    width: 13px;
    height: 2px;
}
.small .search {
    width: 177px;
    height: 26px;
    padding: 0 4px 0 9px;
}
.small .search input {
    font-size: 11px;
    padding-left: 7px;
}
.small .lens {
    width: 12px;
    height: 12px;
}
.small .sheep {
    width: 38px;
    height: 20px;
}
.small .tray {
    padding-right: 17px;
}
.small .t-up {
    width: 10px;
    height: 10px;
    margin-right: 16px;
}
.small .t-mic {
    width: 10px;
    height: 13px;
    margin-right: 16px;
}
.small .lang {
    margin-right: 14px;
}
.small .t-mon {
    width: 13px;
    height: 13px;
    margin-right: 6px;
}
.small .t-vol {
    width: 14px;
    height: 11px;
    margin-right: 12px;
}
.small .t-bell {
    width: 11px;
    height: 13px;
    margin-left: 7px;
}
```
